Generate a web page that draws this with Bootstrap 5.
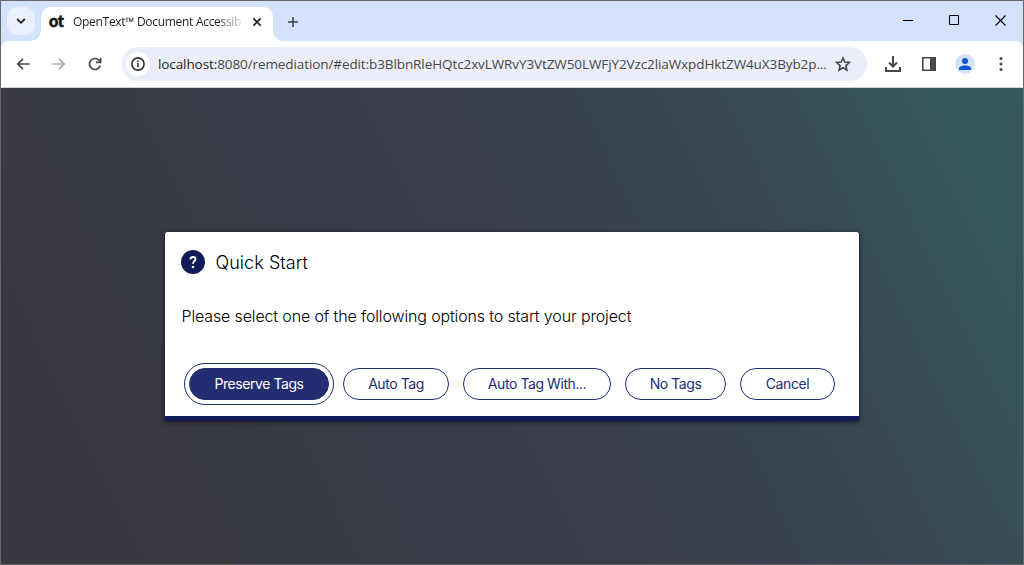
<!DOCTYPE html>
<html lang="en">
<head>
<meta charset="utf-8">
<meta name="viewport" content="width=device-width, initial-scale=1">
<title>OpenText Document Accessibility</title>
<link href="https://cdn.jsdelivr.net/npm/bootstrap@5.3.0/dist/css/bootstrap.min.css" rel="stylesheet">
<style>
html,body{height:100%;overflow:hidden}
body{font-family:"Open Sans","Noto Sans",sans-serif}
svg{display:block;flex:none}
.browser{height:565px;border:1px solid #66676b;background:#d3e3fd}
.tabstrip{height:40px;padding:6px 0 0 6px}
.tab-search{width:28px;height:28px;border-radius:10px;background:#e9f1fe}
.tab-active{width:232px;height:34px;margin-left:6px;padding:0 11px 4px 8px;background:#fff;border-radius:10px 10px 0 0}
.tab-active::before,.tab-active::after{content:"";position:absolute;bottom:0;width:10px;height:10px}
.tab-active::before{left:-10px;background:radial-gradient(circle at 0 0,transparent 9.5px,#fff 10px)}
.tab-active::after{right:-10px;background:radial-gradient(circle at 100% 0,transparent 9.5px,#fff 10px)}
.favicon{width:17px;margin-top:-3px;font:900 16px/16px Lato,sans-serif;letter-spacing:-.4px;color:#111;-webkit-text-stroke:.5px #111}
.tab-title{width:169px;margin-left:7px;font-size:12px;line-height:18px;letter-spacing:-.3px;color:#1f1f1f;-webkit-mask-image:linear-gradient(90deg,#000 144px,transparent 172px)}
.toolbar{height:46px;background:#fff;border-radius:8px 8px 0 0}
.address{width:746px;height:34px;background:#ebeef8;padding:0 16px 0 5px}
.site-info{width:24px;height:24px}
.url{margin-left:8px;width:670px;font-size:13.5px;line-height:20px;letter-spacing:-.095px;color:#474747}
.url b{font-weight:400;color:#1f1f1f}
.avatar{width:20px;height:20px;background:#d3e3fd}
.page{border-top:1px solid #cfd3d6;background:linear-gradient(64deg,#38363e 0%,#383a43 25%,#393c48 45%,#3a3f50 59%,#374b57 78%,#345b60 100%)}
.dialog{width:694px;height:189px;margin-top:144px;background:#fff;border-bottom:5px solid #101b58;border-radius:3px 3px 0 0;box-shadow:0 1px 5px rgba(0,0,0,.65);font-family:Inter,Roboto,sans-serif;color:#000}
.dialog-head{padding:18px 16px 0;gap:10.500px}
.dialog-title{font-size:18px;line-height:24px;letter-spacing:.05px;font-weight:300;padding-top:1px;height:24px}
.dialog-text{margin:30px 0 0 16.500px;font-size:16px;line-height:24px;letter-spacing:-.14px;font-weight:300}
.choices{margin:40px 0 0 24px;gap:14px}
.choices .btn{height:32px;padding:0;font-size:14px;line-height:30px;letter-spacing:-.43px;border:1px solid #232e72;color:#232e72;border-radius:16px;white-space:nowrap}
.choices .btn-go{background:#232e72;color:#fff;outline:1px solid #232e72;outline-offset:4px}
.opt-preserve{width:140px}.opt-auto{width:106px}.opt-with{width:148px}.opt-none{width:101px}.opt-cancel{width:95px}
</style>
</head>
<body>
<div class="browser d-flex flex-column">
  <header class="tabstrip d-flex align-items-start">
    <div class="tab-search d-flex align-items-center justify-content-center">
      <svg width="10" height="8" viewBox="0 0 10 8" fill="none" stroke="#202124" stroke-width="1.8"><path d="M1.200 2l3.800 3.800L8.800 2"/></svg>
    </div>
    <div class="tab-active position-relative d-flex align-items-center">
      <span class="favicon">ot</span>
      <span class="tab-title text-nowrap">OpenText™ Document Accessib</span>
      <svg class="ms-auto" width="10" height="10" viewBox="0 0 10 10" stroke="#1f1f1f" stroke-width="1.6"><path d="M1.400 1.400l7.200 7.200M8.600 1.400L1.400 8.600"/></svg>
    </div>
    <svg style="margin:9px 0 0 14px" width="12" height="12" viewBox="0 0 12 12" stroke="#3c4043" stroke-width="1.500"><path d="M6 1v10M1 6h10"/></svg>
    <div class="ms-auto d-flex align-items-center" style="gap:36px;padding:8px 17px 0 0">
      <svg width="10" height="11" viewBox="0 0 10 11" stroke="#000"><path d="M0 5.500h10"/></svg>
      <svg width="10" height="11" viewBox="0 0 10 11" fill="none" stroke="#000"><path d="M.5.500h9v9h-9z"/></svg>
      <svg width="11" height="11" viewBox="0 0 11 11" stroke="#000" stroke-width="1.100"><path d="M.5.500l10 10M10.500.500l-10 10"/></svg>
    </div>
  </header>
  <nav class="toolbar d-flex align-items-center flex-shrink-0">
    <svg style="margin-left:15px" width="14" height="12" viewBox="0 0 14 12" fill="none" stroke="#474747" stroke-width="1.700"><path d="M13.500 6H2M7 .8L1.800 6 7 11.200"/></svg>
    <svg style="margin-left:22px" width="14" height="12" viewBox="0 0 14 12" fill="none" stroke="#aaa" stroke-width="1.700"><path d="M.5 6h11.500M7 .8L12.200 6 7 11.200"/></svg>
    <svg style="margin-left:22px" width="14" height="14" viewBox="0 0 14 14" fill="none" stroke="#474747" stroke-width="1.700"><path d="M12.300 8.500A5.500 5.500 0 1 1 11 3.200L12.600 5"/><path d="M12.600.8v4.600H8"/></svg>
    <div class="address d-flex align-items-center rounded-pill" style="margin-left:19px">
      <span class="site-info bg-white rounded-circle d-flex align-items-center justify-content-center">
        <svg width="14" height="14" viewBox="0 0 14 14" fill="none" stroke="#303134" stroke-width="1.600"><circle cx="7" cy="7" r="6.100"/><path d="M7 6v4.300M7 3.500v1.500"/></svg>
      </span>
      <span class="url text-nowrap"><b>localhost:</b>8080/remediation/#edit:b3BlbnRleHQtc2xvLWRvY3VtZW50LWFjY2Vzc2liaWxpdHktZW4uX3Byb2p...</span>
      <svg class="ms-auto" width="16" height="16" viewBox="0 0 16 16" fill="none" stroke="#474747" stroke-width="1.600"><path d="M8 2l1.800 4.100 4.500.4-3.400 3.100 1 4.500L8 11.700l-3.900 2.400 1-4.500-3.400-3.100 4.500-.4z"/></svg>
    </div>
    <svg style="margin-left:18px" width="16" height="16" viewBox="0 0 16 16" fill="none" stroke="#474747" stroke-width="2"><path d="M8 0v10M4 6.500l4 4 4-4M1 11v4h14v-4"/></svg>
    <svg style="margin-left:21px" width="14" height="14" viewBox="0 0 14 14"><path d="M.800.800h12.400v12.400H.8z" fill="none" stroke="#474747" stroke-width="1.600"/><path d="M8 1h5v12H8z" fill="#474747"/></svg>
    <span class="avatar rounded-circle d-flex align-items-center justify-content-center" style="margin-left:19px">
      <svg width="12" height="12" viewBox="0 0 12 12" fill="#0b57d0"><circle cx="6" cy="3" r="3"/><path d="M0 12v-1.500C0 8.500 3 7.500 6 7.500s6 1 6 3V12z"/></svg>
    </span>
    <svg style="margin-left:24px" width="4" height="14" viewBox="0 0 4 14" fill="#474747"><circle cx="2" cy="1.600" r="1.500"/><circle cx="2" cy="7" r="1.500"/><circle cx="2" cy="12.400" r="1.500"/></svg>
  </nav>
  <main class="page flex-grow-1">
    <section class="dialog mx-auto">
      <div class="dialog-head d-flex align-items-center">
        <svg width="24" height="24" viewBox="0 0 24 24"><circle cx="12" cy="12" r="12" fill="#101b58"/><path d="M9.400 9.400Q9.600 7 12 7T14.500 9.200C14.500 11 12 11.200 12 13.700" fill="none" stroke="#fff" stroke-width="1.900"/><circle cx="12" cy="17" r="1.300" fill="#fff"/></svg>
        <h1 class="dialog-title mb-0">Quick Start</h1>
      </div>
      <p class="dialog-text mb-0">Please select one of the following options to start your project</p>
      <div class="choices d-flex">
        <button class="btn btn-go opt-preserve">Preserve Tags</button>
        <button class="btn opt-auto">Auto Tag</button>
        <button class="btn opt-with">Auto Tag With...</button>
        <button class="btn opt-none">No Tags</button>
        <button class="btn opt-cancel">Cancel</button>
      </div>
    </section>
  </main>
</div>
<script src="https://cdn.jsdelivr.net/npm/bootstrap@5.3.0/dist/js/bootstrap.bundle.min.js"></script>
</body>
</html>
